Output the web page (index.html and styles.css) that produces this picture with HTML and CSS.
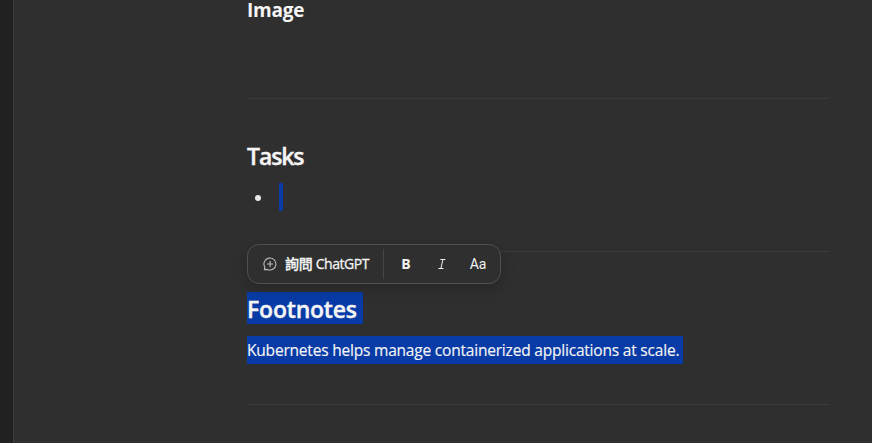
FILE: index.html
```html
<!DOCTYPE html>
<html lang="zh-Hant">
<head>
<meta charset="utf-8">
<title>Document</title>
<link rel="stylesheet" href="styles.css">
</head>
<body>
<div class="app">
  <aside class="rail"></aside>
  <main class="page">
    <article class="doc">
      <section class="section section-image"><h3>Image</h3></section>
      <section class="section section-tasks">
        <h2>Tasks</h2>
        <ul><li><span class="caret"></span></li></ul>
      </section>
      <section class="section section-notes">
        <div class="toolbar">
          <button class="ask">
            <svg width="14" height="14" viewBox="0 0 14 14" fill="none" stroke="currentColor" stroke-width="1.1" stroke-linecap="round" stroke-linejoin="round"><path d="M1.3 12.8 1.8 10.1A6 6 0 1 1 4.3 12.4Z"/><path d="M7.1 4.4v5.2M4.5 7h5.2"/></svg>
            <span>詢問 <span class="brand">ChatGPT</span></span>
          </button>
          <span class="divider"></span>
          <button class="bold">B</button>
          <button class="italic"><svg width="8" height="10" viewBox="0 0 8 10" fill="none" stroke="currentColor" stroke-width="1"><path d="M2.4.5h5M.4 9.5h5M4.9.5 2.9 9.5"/></svg></button>
          <button class="case">Aa</button>
        </div>
        <h2 class="selected">Footnotes</h2>
        <p class="selected">Kubernetes helps manage containerized applications at scale.</p>
      </section>
    </article>
  </main>
</div>
</body>
</html>
```
FILE: styles.css
```css
* { box-sizing: border-box; }
body { margin: 0; background: #2f2f2f; color: #f5f5f5; font-family: "Open Sans", "Noto Sans", "Noto Sans CJK TC", sans-serif; }
.app { display: flex; height: 443px; overflow: hidden; }
.rail { width: 14px; background: #212121; border-right: 1px solid #3c3c3c; }
.page { flex: 1; padding-left: 233px; }
.doc { width: 582px; }
h2, h3, p, ul { margin: 0; }
h2 { font-size: 23px; line-height: 32px; font-weight: 600; letter-spacing: -1.1px; -webkit-text-stroke: .4px currentColor; }
h3 { font-size: 19px; line-height: 20px; font-weight: 700; letter-spacing: -.2px; }
.section { border-bottom: 1px solid #3a3a3a; }
.section-image { height: 99px; }
.section-tasks { height: 153px; padding-top: 41px; }
.section-notes { position: relative; height: 153px; padding-top: 40px; }
ul { list-style: none; padding: 0; margin-top: 11px; }
li { display: flex; align-items: center; height: 28px; padding-left: 8px; }
li::before { content: ""; width: 6px; height: 6px; border-radius: 50%; background: #e8e8e8; margin-top: 2px; }
.caret { width: 4px; height: 28px; margin-left: 18px; background: #083ba6; }
.selected { background: #083ba6; white-space: nowrap; }
h2.selected { width: 116px; height: 32px; line-height: 34px; letter-spacing: -.2px; }
p.selected { width: 436px; height: 28px; margin-top: 12px; font-size: 15.5px; line-height: 28px; letter-spacing: -.2px; -webkit-text-stroke: .15px currentColor; }
.toolbar { position: absolute; left: 0; top: -8px; width: 254px; height: 40px; display: flex; align-items: center; background: #2f2f2f; border: 1px solid #505050; border-radius: 12px; box-shadow: 0 5px 16px rgba(0,0,0,.2); }
button { display: flex; align-items: center; justify-content: center; padding: 0; border: 0; background: none; color: #f3f3f3; font: 600 13px/20px "Open Sans", "Noto Sans CJK TC", sans-serif; }
.ask { width: 135px; justify-content: flex-start; padding-left: 15px; gap: 8px; white-space: nowrap; font-size: 14px; font-weight: 500; letter-spacing: -.3px; -webkit-text-stroke: .3px currentColor; }
.ask svg { flex: none; color: #bdbdbd; }
.brand { letter-spacing: -.45px; }
.divider { width: 1px; height: 30px; background: #464646; }
.bold { width: 44px; font-weight: 700; font-size: 14px; }
.italic { width: 28px; }
.case { width: 44px; font-weight: 400; font-family: Roboto, sans-serif; font-size: 14px; }
```
